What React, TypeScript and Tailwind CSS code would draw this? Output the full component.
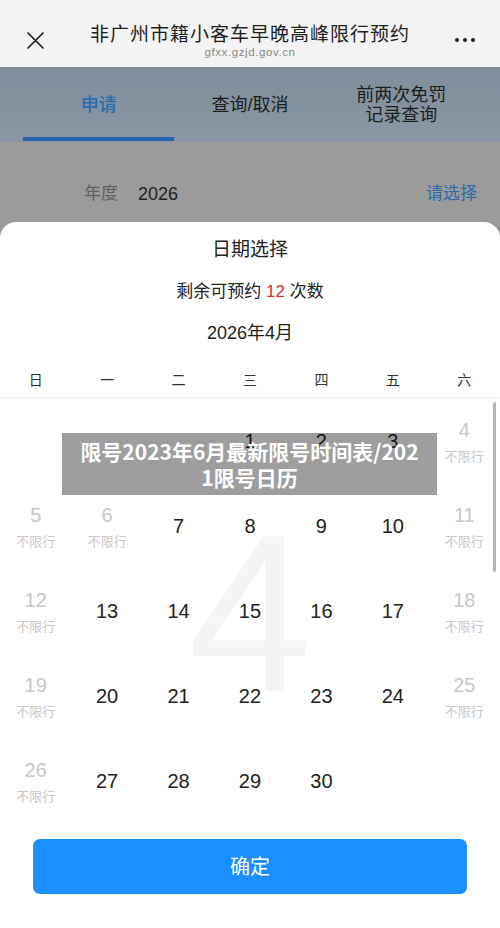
import React from "react";

const FONT = "font-['Liberation_Sans','Noto_Sans_CJK_SC',sans-serif]";

type Cell = { d?: number; off?: boolean };

const rows: Cell[][] = [
  [{}, {}, {}, { d: 1 }, { d: 2 }, { d: 3 }, { d: 4, off: true }],
  [{ d: 5, off: true }, { d: 6, off: true }, { d: 7 }, { d: 8 }, { d: 9 }, { d: 10 }, { d: 11, off: true }],
  [{ d: 12, off: true }, { d: 13 }, { d: 14 }, { d: 15 }, { d: 16 }, { d: 17 }, { d: 18, off: true }],
  [{ d: 19, off: true }, { d: 20 }, { d: 21 }, { d: 22 }, { d: 23 }, { d: 24 }, { d: 25, off: true }],
  [{ d: 26, off: true }, { d: 27 }, { d: 28 }, { d: 29 }, { d: 30 }, {}, {}],
];

const weekdays = ["日", "一", "二", "三", "四", "五", "六"];

export default function App() {
  return (
    <div className={`w-[500px] h-[928px] overflow-hidden bg-[#9b9b9b] flex flex-col ${FONT}`}>
      {/* top bar */}
      <div className="h-[67px] bg-[#f3f3f3] flex items-center px-[26px] shrink-0 relative">
        <svg width="19" height="19" viewBox="0 0 19 19" className="mt-[13px]">
          <path d="M2 2 L17 17 M17 2 L2 17" stroke="#222" strokeWidth="1.7" strokeLinecap="round" />
        </svg>
        <div className="flex-1 flex flex-col items-center mt-[14px]">
          <div className="text-[19px] leading-[26px] tracking-[1px] text-[#1f1f1f]">非广州市籍小客车早晚高峰限行预约</div>
          <div className="text-[11.5px] leading-[14px] tracking-[0.6px] text-[#8a8a8a] mt-[-3px]">gfxx.gzjd.gov.cn</div>
        </div>
        <div className="flex gap-[4px] mt-[13px] mr-[-1px]">
          <span className="w-[4px] h-[4px] rounded-full bg-[#222]" />
          <span className="w-[4px] h-[4px] rounded-full bg-[#222]" />
          <span className="w-[4px] h-[4px] rounded-full bg-[#222]" />
        </div>
      </div>

      {/* tabs */}
      <div className="h-[75px] shrink-0 bg-gradient-to-b from-[#7f8e9c] to-[#8a97a4] grid grid-cols-3 px-[23px]">
        <div className="relative flex items-center justify-center">
          <span className="text-[18px] text-[#2a6db0] font-medium mt-[2px]">申请</span>
          <div className="absolute left-0 right-0 bottom-[1px] h-[4px] bg-[#2566ad]" />
        </div>
        <div className="flex items-center justify-center">
          <span className="text-[18px] text-[#1c1c1c] mt-[2px]">查询/取消</span>
        </div>
        <div className="flex items-center justify-center">
          <span className="text-[18px] leading-[20px] text-[#1c1c1c] text-center">
            前两次免罚
            <br />
            记录查询
          </span>
        </div>
      </div>

      {/* year row */}
      <div className="h-[80px] shrink-0 flex items-start pt-[39px] pl-[84px] pr-[23px]">
        <span className="text-[17px] leading-[26px] text-[#5f5f5f]">年度</span>
        <span className="text-[18px] leading-[26px] text-[#1e1e1e] ml-[20px]">2026</span>
        <span className="text-[17px] leading-[26px] text-[#2d6ca8] ml-auto">请选择</span>
      </div>

      {/* modal */}
      <div className="flex-1 bg-white rounded-t-[16px] flex flex-col relative">
        <div className="pt-[14px] flex flex-col items-center">
          <div className="text-[19px] leading-[28px] text-[#222]">日期选择</div>
          <div className="text-[17px] leading-[28px] text-[#222] mt-[14px]">
            剩余可预约 <span className="text-[#d42f2f]">12</span> 次数
          </div>
          <div className="text-[18px] leading-[28px] text-[#222] mt-[13px]">2026年4月</div>
        </div>
        <div className="grid grid-cols-7 h-[34px] mt-[17px] items-center border-b border-[#f0f0f0] shadow-[0_1px_2px_rgba(0,0,0,0.04)]">
          {weekdays.map((w) => (
            <div key={w} className="text-center text-[14px] text-[#333]">
              {w}
            </div>
          ))}
        </div>

        {/* calendar body */}
        <div className="relative mt-[2px]">
          <div
            aria-hidden="true"
            className="absolute left-0 right-0 top-[101px] text-center text-[224px] leading-none text-[#f3f4f6] select-none pointer-events-none"
          >
            4
          </div>
          <div className="relative">
            {rows.map((r, i) => (
              <div key={i} className="grid grid-cols-7 h-[85px]">
                {r.map((c, j) => (
                  <div key={j} className="flex flex-col items-center justify-center">
                    {c.d !== undefined &&
                      (c.off ? (
                        <div className="flex flex-col items-center pt-[4px]">
                          <span className="text-[20px] leading-[24px] text-[#c8c8c8]">{c.d}</span>
                          <span className="text-[13px] leading-[30px] text-[#c8c8c8]">不限行</span>
                        </div>
                      ) : (
                        <span className="text-[20px] leading-[24px] text-[#222] pb-[4px]">{c.d}</span>
                      ))}
                  </div>
                ))}
              </div>
            ))}
          </div>
          <div className="absolute right-[4px] top-[2px] w-[3px] h-[170px] rounded-full bg-[#b5b5b5]" />
        </div>

        <div className="px-[33px] mt-[14px]">
          <div className="h-[55px] rounded-[7px] bg-[#1a8ffd] flex items-center justify-center text-white text-[20px]">
            确定
          </div>
        </div>
      </div>

      {/* caption overlay */}
      <div className="absolute left-[62px] top-[433px] w-[375px] h-[62px] bg-[rgba(0,0,0,0.38)] flex items-center justify-center">
        <div className="text-white font-bold text-[21px] leading-[26px] text-center whitespace-nowrap font-['Noto_Sans_CJK_SC','Liberation_Sans',sans-serif]">
          限号2023年6月最新限号时间表/202
          <br />
          1限号日历
        </div>
      </div>
    </div>
  );
}
